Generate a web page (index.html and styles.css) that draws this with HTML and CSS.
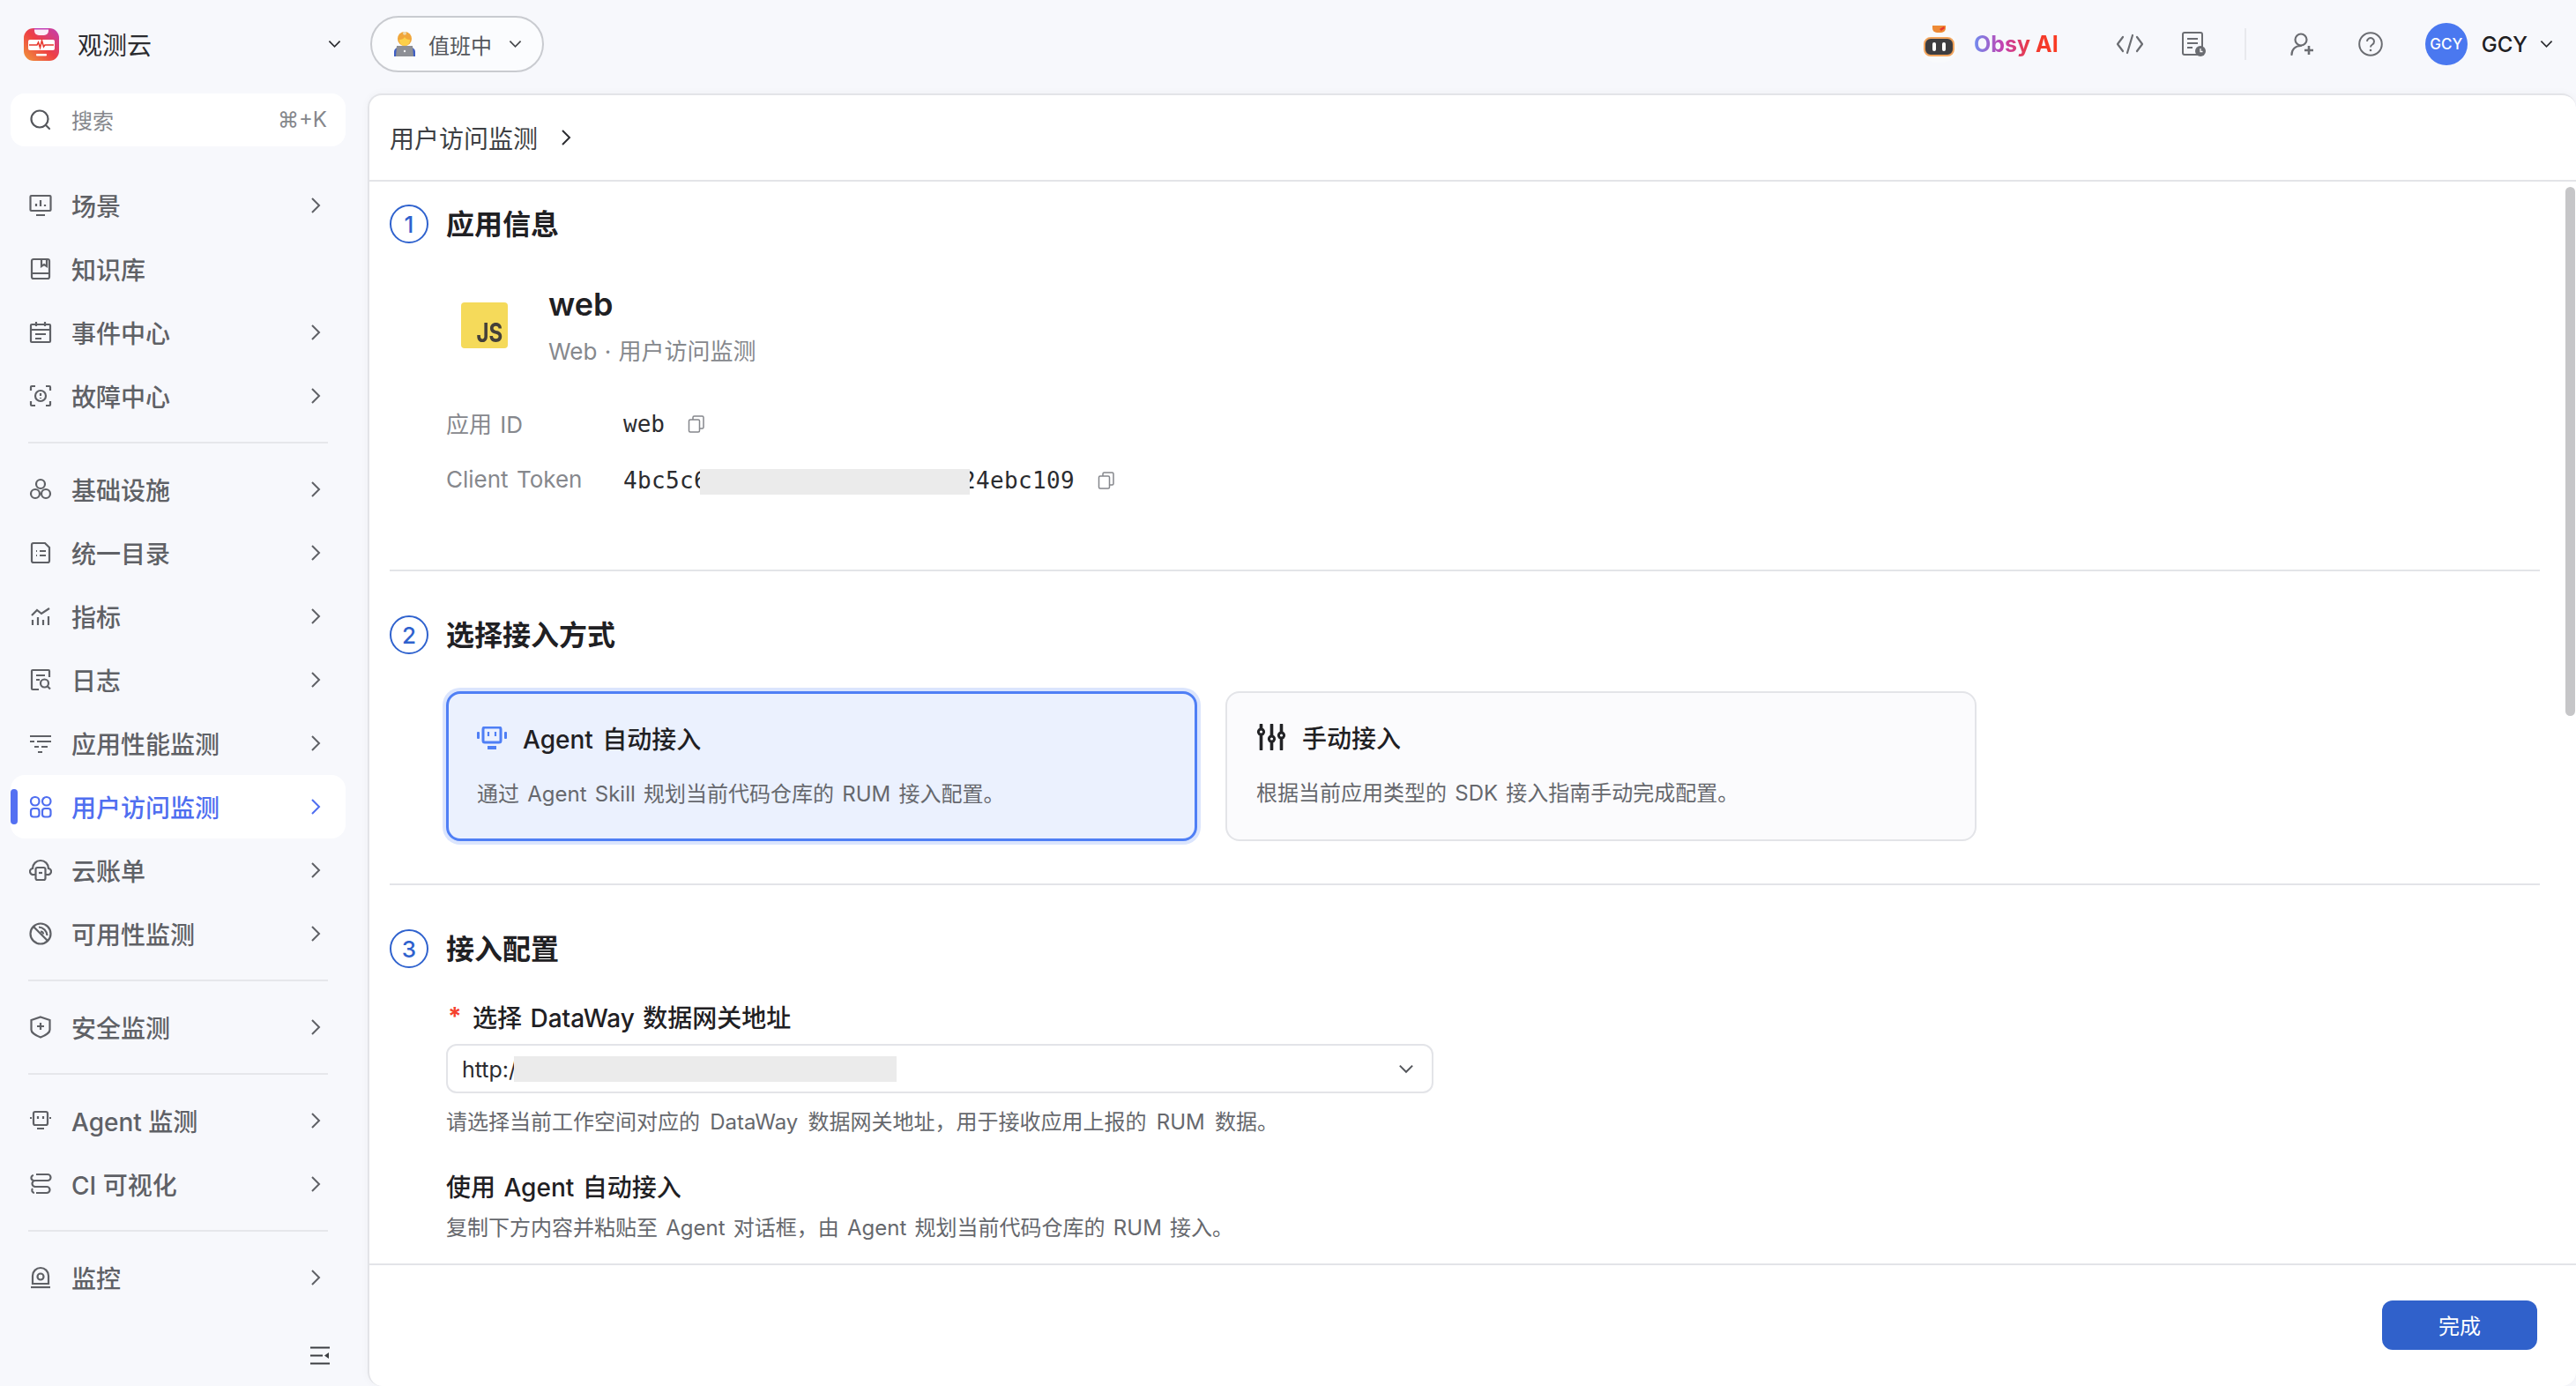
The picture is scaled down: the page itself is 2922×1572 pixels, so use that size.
FILE: index.html
```html
<!DOCTYPE html>
<html lang="zh-CN">
  <head>
    <meta charset="UTF-8" />
    <title>用户访问监测</title>
    <link rel="stylesheet" href="styles.css">
  </head>

  <body>
    <svg class="defs" width="0" height="0">
      <symbol id="chev-right" viewBox="0 0 12 20"><path d="M2 2l8 8-8 8" fill="none" stroke="currentColor" stroke-width="2"/></symbol>
      <symbol id="chev-down" viewBox="0 0 16 10"><path d="M1.5 1.5L8 8l6.5-6.5" fill="none" stroke="currentColor" stroke-width="1.8"/></symbol>
      <symbol id="copy" viewBox="0 0 20 20"><g fill="none" stroke="currentColor" stroke-width="1.5"><rect x="1.5" y="5" width="12" height="14" rx="1.5"/><path d="M6 5V2.5A1.5 1.5 0 0 1 7.5 1h9A1.5 1.5 0 0 1 18 2.500v11a1.500 1.500 0 0 1-1.500 1.500h-3"/></g></symbol>
    </svg>

    <header class="topbar">
      <div class="brand">
        <svg class="brand-logo" viewBox="0 0 40 37">
          <defs>
            <linearGradient id="logo-fill" x1="0" y1="1" x2="1" y2="0"><stop offset="0" stop-color="#f0983a"/><stop offset=".5" stop-color="#ee3f45"/><stop offset="1" stop-color="#c23fb4"/></linearGradient>
          </defs>
          <rect y="0" width="40" height="37" rx="11" fill="url(#logo-fill)"/>
          <path d="M12 0h16v3a5 5 0 0 1-5 5h-6a5 5 0 0 1-5-5z" fill="#fbeef8"/>
          <path d="M12 0h16v1.500H12z" fill="#c23fb4"/>
          <rect x="5" y="13" width="30" height="12" rx="2" fill="#fff"/>
          <path d="M6 19h9l1.500-3 2 6 2-8 2 7 1.500-2h10" fill="none" stroke="#e8392f" stroke-width="1.600"/>
          <rect x="14" y="29" width="12" height="2.500" rx="1" fill="#fff"/>
        </svg>
        <span class="brand-name">观测云</span>
        <svg class="brand-chev"><use href="#chev-down"/></svg>
      </div>

      <div class="duty-pill">
        <svg class="duty-emoji" viewBox="0 0 26 28">
          <circle cx="13" cy="8" r="8" fill="#f0a63a"/>
          <circle cx="13" cy="1.800" r="2" fill="#ecd9b0"/>
          <path d="M7 9c3 0 5-1 6-3 1 2 3 3 6 3v1a6 6 0 0 1-12 0z" fill="#fcd04a"/>
          <path d="M1 28v-5c0-3 2-5 5-5h14c3 0 5 2 5 5v5z" fill="#3f5fc4"/>
          <path d="M4 16h18l1 12H3z" fill="#8d8f95"/>
          <circle cx="13" cy="22" r="1.200" fill="#f2f2f2"/>
        </svg>
        <span>值班中</span>
        <svg class="duty-chev"><use href="#chev-down"/></svg>
      </div>

      <div class="topbar-right">
        <svg class="obsy-logo" viewBox="0 0 47 43">
          <path d="M23 4c13 0 22 9 22 21 0 11-9 17-21 17S2 36 2 25C2 13 11 4 23 4z" fill="#f9fafc"/>
          <path d="M16 0h15v3a5 5 0 0 1-5 5h-5a5 5 0 0 1-5-5z" fill="#ee8a35"/>
          <path d="M24 4l5-3 1 2-4 3z" fill="#e8392f"/>
          <rect x="7" y="14" width="33" height="20" rx="7" fill="#3d3d40" stroke="#f2a45c" stroke-width="2"/>
          <rect x="16" y="19" width="4" height="10" rx="2" fill="#fff"/>
          <rect x="27" y="19" width="4" height="10" rx="2" fill="#fff"/>
        </svg>
        <span class="obsy-text">Obsy AI</span>

        <svg class="tool tool-code" viewBox="0 0 32 24"><path d="M8 4L2 12l6 8M24 4l6 8-6 8M19 2l-6 20" fill="none" stroke="#6b6d72" stroke-width="2.200" stroke-linecap="round" stroke-linejoin="round"/></svg>
        <svg class="tool tool-doc" viewBox="0 0 27 28">
          <rect x="1" y="1" width="22" height="25" rx="2" fill="none" stroke="#6b6d72" stroke-width="2"/>
          <path d="M6 8h12M6 13h12M6 18h6" stroke="#6b6d72" stroke-width="2"/>
          <circle cx="21" cy="22" r="6" fill="#6b6d72"/>
          <path d="M21 19v3.500h2.500" fill="none" stroke="#fff" stroke-width="1.300"/>
        </svg>
        <div class="topbar-line"></div>
        <svg class="tool tool-user" viewBox="0 0 27 26">
          <circle cx="12" cy="8" r="6.500" fill="none" stroke="#6b6d72" stroke-width="2.200"/>
          <path d="M1.500 25c0-6 4-10 10.500-10" fill="none" stroke="#6b6d72" stroke-width="2.200" stroke-linecap="round"/>
          <path d="M21 15v10M16 20h10" stroke="#6b6d72" stroke-width="2.600"/>
        </svg>
        <svg class="tool tool-help" viewBox="0 0 28 28">
          <circle cx="14" cy="14" r="12.800" fill="none" stroke="#6b6d72" stroke-width="2"/>
          <path d="M10 11a4 4 0 1 1 6 3.500c-1.300.8-2 1.500-2 3" fill="none" stroke="#6b6d72" stroke-width="2"/>
          <circle cx="14" cy="21" r="1.300" fill="#6b6d72"/>
        </svg>
        <div class="avatar">GCY</div>
        <span class="user-name">GCY</span>
        <svg class="user-chev"><use href="#chev-down"/></svg>
      </div>
    </header>

    <div class="layout">
      <nav class="sidebar">
        <div class="search-box">
          <svg class="search-icon" viewBox="0 0 26 24"><circle cx="12" cy="11" r="9.500" fill="none" stroke="#55575c" stroke-width="2.200"/><path d="M19 18l4 4" stroke="#55575c" stroke-width="2.200" stroke-linecap="round"/></svg>
          <span class="search-text">搜索</span>
          <span class="search-key">⌘+K</span>
        </div>

        <div class="nav-group first">
          <a class="nav-item">
            <svg class="nav-icon" viewBox="0 0 26 26"><rect x="1.500" y="2" width="23" height="17" rx="1" /><path d="M8 14v-3M13 14V7M18 14v-2M8 24h10"/></svg>
            <span>场景</span>
            <svg class="nav-chev"><use href="#chev-right"/></svg>
          </a>
          <a class="nav-item">
            <svg class="nav-icon" viewBox="0 0 26 26"><rect x="3" y="2" width="20" height="22" rx="2"/><path d="M3 18h20M14 2v8l3-2 3 2V2" /></svg>
            <span>知识库</span>
          </a>
          <a class="nav-item">
            <svg class="nav-icon" viewBox="0 0 26 26"><rect x="2" y="4" width="22" height="20" rx="1"/><path d="M2 10h22M8 1v5M18 1v5M7 15h12M7 20h7"/></svg>
            <span>事件中心</span>
            <svg class="nav-chev"><use href="#chev-right"/></svg>
          </a>
          <a class="nav-item">
            <svg class="nav-icon" viewBox="0 0 26 26"><path d="M2 7V3a1 1 0 0 1 1-1h4M19 2h4a1 1 0 0 1 1 1v4M2 19v4a1 1 0 0 0 1 1h4M24 19v4a1 1 0 0 1-1 1h-4"/><circle cx="13" cy="13" r="6"/><path d="M13 10v3M13 15v1"/></svg>
            <span>故障中心</span>
            <svg class="nav-chev"><use href="#chev-right"/></svg>
          </a>
        </div>

        <div class="nav-group">
          <a class="nav-item">
            <svg class="nav-icon" viewBox="0 0 26 26"><circle cx="13" cy="7" r="5"/><circle cx="7" cy="18" r="5"/><circle cx="19" cy="18" r="5"/></svg>
            <span>基础设施</span>
            <svg class="nav-chev"><use href="#chev-right"/></svg>
          </a>
          <a class="nav-item">
            <svg class="nav-icon" viewBox="0 0 26 26"><path d="M3 4a2 2 0 0 1 2-2h13l5 5v15a2 2 0 0 1-2 2H5a2 2 0 0 1-2-2z"/><path d="M8 11h1M12 11h7M8 16h1M12 16h7"/></svg>
            <span>统一目录</span>
            <svg class="nav-chev"><use href="#chev-right"/></svg>
          </a>
          <a class="nav-item">
            <svg class="nav-icon" viewBox="0 0 26 26"><path d="M3 12l6-6 5 4 9-6M4 17v6M10 14v9M16 17v6M22 13v10"/></svg>
            <span>指标</span>
            <svg class="nav-chev"><use href="#chev-right"/></svg>
          </a>
          <a class="nav-item">
            <svg class="nav-icon" viewBox="0 0 26 26"><path d="M11 24H4a1 1 0 0 1-1-1V3a1 1 0 0 1 1-1h18a1 1 0 0 1 1 1v7"/><path d="M8 8h10M8 13h4"/><circle cx="17.500" cy="17" r="4.500"/><path d="M21 20.500l3 3"/></svg>
            <span>日志</span>
            <svg class="nav-chev"><use href="#chev-right"/></svg>
          </a>
          <a class="nav-item">
            <svg class="nav-icon" viewBox="0 0 26 26"><path d="M1 5h24M1 11h5M9 11h16M6 17h5M14 17h7M10 23h5"/></svg>
            <span>应用性能监测</span>
            <svg class="nav-chev"><use href="#chev-right"/></svg>
          </a>
          <a class="nav-item active">
            <i class="nav-marker"></i>
            <svg class="nav-icon" viewBox="0 0 26 26"><rect x="2" y="2" width="9.500" height="9.500" rx="4.500"/><rect x="15" y="2" width="9.500" height="9.500" rx="4.750"/><rect x="2" y="15" width="9.500" height="9.500" rx="3"/><rect x="15" y="15" width="9.500" height="9.500" rx="3"/></svg>
            <span>用户访问监测</span>
            <svg class="nav-chev"><use href="#chev-right"/></svg>
          </a>
          <a class="nav-item">
            <svg class="nav-icon" viewBox="0 0 26 26"><path d="M7 18H5a3.500 3.500 0 0 1-1-7 9 9 0 0 1 18 0 3.500 3.500 0 0 1-1 7h-2"/><rect x="7.500" y="10" width="11" height="14" rx="2"/><path d="M11 16h4"/></svg>
            <span>云账单</span>
            <svg class="nav-chev"><use href="#chev-right"/></svg>
          </a>
          <a class="nav-item">
            <svg class="nav-icon" viewBox="0 0 26 26"><circle cx="13" cy="13" r="11.500"/><path d="M5 5l16 16M11 5.500a10 10 0 0 1 9.500 9.500M13 10.500a3 3 0 0 1 3 3"/></svg>
            <span>可用性监测</span>
            <svg class="nav-chev"><use href="#chev-right"/></svg>
          </a>
        </div>

        <div class="nav-group">
          <a class="nav-item">
            <svg class="nav-icon" viewBox="0 0 26 26"><path d="M13 1.500l10.500 3.500v11c0 3-5 6.500-10.500 8.500C7.500 22.500 2.500 19 2.500 16V5z"/><path d="M13 8v8M9 12h8"/></svg>
            <span>安全监测</span>
            <svg class="nav-chev"><use href="#chev-right"/></svg>
          </a>
        </div>

        <div class="nav-group">
          <a class="nav-item">
            <svg class="nav-icon" viewBox="0 0 26 26"><rect x="5" y="3" width="16" height="15" rx="2"/><path d="M10 8v3M16 8v3M1 10h2M23 10h2M9 22h8"/></svg>
            <span>Agent 监测</span>
            <svg class="nav-chev"><use href="#chev-right"/></svg>
          </a>
          <a class="nav-item">
            <svg class="nav-icon" viewBox="0 0 26 26"><path d="M8 2h13a2.500 2.500 0 0 1 0 7H7a3.500 3.500 0 0 0 0 7h13a3 3 0 0 1 0 7H8"/><path d="M5 3a3 3 0 0 0 1 6M4 18a3 3 0 0 0 2 5"/></svg>
            <span>CI 可视化</span>
            <svg class="nav-chev"><use href="#chev-right"/></svg>
          </a>
        </div>

        <div class="nav-group">
          <a class="nav-item">
            <svg class="nav-icon" viewBox="0 0 26 26"><path d="M4 20V11a9 9 0 0 1 18 0v9z"/><circle cx="13" cy="12" r="3.500"/><path d="M2 24h22"/></svg>
            <span>监控</span>
            <svg class="nav-chev"><use href="#chev-right"/></svg>
          </a>
        </div>

        <svg class="collapse-icon" viewBox="0 0 22 21"><path d="M0 1.500h22M0 10.500h14M0 19.500h22" stroke="#3c3e42" stroke-width="2.200"/><path d="M21 7v7l-5-3.500z" fill="#3c3e42"/></svg>
      </nav>

      <main class="panel">
        <div class="crumb">
          <span>用户访问监测</span>
          <svg class="crumb-chev"><use href="#chev-right"/></svg>
        </div>

        <div class="content">
          <div class="scroll-thumb"></div>

          <section class="step">
            <div class="step-head"><span class="step-no">1</span><h2>应用信息</h2></div>
            <div class="step-body">
              <div class="app-row">
                <div class="js-logo"><span>JS</span></div>
                <div>
                  <div class="app-name">web</div>
                  <div class="app-sub">Web · 用户访问监测</div>
                </div>
              </div>
              <div class="info-row first">
                <span class="info-label">应用 ID</span>
                <span class="info-value">web</span>
                <svg class="copy-icon"><use href="#copy"/></svg>
              </div>
              <div class="info-row">
                <span class="info-label">Client Token</span>
                <span class="info-value token">4bc5c6<i class="mask token-mask"></i><span class="token-rest">24ebc109</span></span>
                <svg class="copy-icon"><use href="#copy"/></svg>
              </div>
            </div>
          </section>

          <section class="step step-mode">
            <div class="step-head"><span class="step-no">2</span><h2>选择接入方式</h2></div>
            <div class="step-body cards">
              <div class="card selected">
                <div class="card-title">
                  <svg class="card-icon" viewBox="0 0 34 26"><rect x="7" y="1" width="20" height="17" rx="2" fill="none" stroke="#4f7ff5" stroke-width="3"/><path d="M13 6v5M21 6v5" stroke="#4f7ff5" stroke-width="2.200"/><rect x="0" y="6" width="3" height="8" rx="1" fill="#4f7ff5"/><rect x="31" y="6" width="3" height="8" rx="1" fill="#4f7ff5"/><rect x="12" y="22" width="10" height="4" fill="#4f7ff5"/></svg>
                  <span>Agent 自动接入</span>
                </div>
                <p>通过 Agent Skill 规划当前代码仓库的 RUM 接入配置。</p>
              </div>
              <div class="card">
                <div class="card-title">
                  <svg class="card-icon manual" viewBox="0 0 33 30"><path d="M5 1v28M17 1v28M28 1v28" stroke="#222326" stroke-width="3.600" stroke-linecap="round"/><g fill="#222326"><circle cx="5" cy="9" r="4.600"/><circle cx="17" cy="17" r="4.600"/><circle cx="28" cy="13" r="4.600"/></g><g fill="#fbfbfd"><circle cx="5" cy="9" r="1.600"/><circle cx="17" cy="17" r="1.600"/><circle cx="28" cy="13" r="1.600"/></g></svg>
                  <span>手动接入</span>
                </div>
                <p>根据当前应用类型的 SDK 接入指南手动完成配置。</p>
              </div>
            </div>
          </section>

          <section class="step step-config">
            <div class="step-head"><span class="step-no">3</span><h2>接入配置</h2></div>
            <div class="step-body">
              <div class="field-label"><span class="required">*</span>选择 DataWay 数据网关地址</div>
              <div class="select">
                <span>http:/</span>
                <i class="mask select-mask"></i>
                <svg class="select-chev"><use href="#chev-down"/></svg>
              </div>
              <p class="help">请选择当前工作空间对应的 DataWay 数据网关地址，用于接收应用上报的 RUM 数据。</p>
              <div class="field-label agent-label">使用 Agent 自动接入</div>
              <p class="help agent-help">复制下方内容并粘贴至 Agent 对话框，由 Agent 规划当前代码仓库的 RUM 接入。</p>
            </div>
          </section>
        </div>

        <footer class="panel-foot">
          <button class="done-btn">完成</button>
        </footer>
      </main>
    </div>
  </body>
</html>
```

FILE: styles.css
```css
* {
  box-sizing: border-box;
}

html,
body {
  margin: 0;
  height: 100%;
}

body {
  display: flex;
  flex-direction: column;
  height: 1572px;
  overflow: hidden;
  background-color: #f7f8fc;
  color: #1f2023;
  font-family: "Inter", "Noto Sans CJK SC", sans-serif;
}

.defs {
  position: absolute;
}

/* top bar */
.topbar {
  display: flex;
  align-items: center;
  flex: none;
  height: 106px;
  padding: 0 26px 6px 27px;
}

.brand {
  display: flex;
  align-items: center;
  width: 360px;
}

.brand-logo {
  width: 40px;
  height: 37px;
}

.brand-name {
  margin-left: 21px;
  font-size: 28px;
  color: #2b2c30;
}

.brand-chev {
  width: 15px;
  height: 10px;
  margin-left: auto;
  color: #2b2c30;
}

.duty-pill {
  display: flex;
  align-items: center;
  width: 197px;
  height: 64px;
  margin-left: 33px;
  padding-left: 24px;
  border: 2px solid #c9cbd0;
  border-radius: 32px;
  background-color: #fbfcfe;
  font-size: 24px;
  color: #54565b;
}

.duty-emoji {
  width: 26px;
  height: 28px;
  margin-right: 14px;
}

.duty-chev {
  width: 15px;
  height: 10px;
  margin-left: 19px;
  color: #45474b;
}

.topbar-right {
  display: flex;
  align-items: center;
  margin-left: auto;
}

.obsy-logo {
  width: 47px;
  height: 43px;
}

.obsy-text {
  margin-left: 16px;
  font-size: 25px;
  font-weight: 700;
  background: linear-gradient(90deg, #6f8df0 0%, #c63fae 35%, #f0392f 70%, #fb3b22 100%);
  -webkit-background-clip: text;
  background-clip: text;
  color: transparent;
}

.tool-code {
  width: 32px;
  height: 24px;
  margin-left: 65px;
}

.tool-doc {
  width: 27px;
  height: 28px;
  margin-left: 43px;
}

.topbar-line {
  width: 2px;
  height: 36px;
  margin-left: 44px;
  background-color: #e8e9ed;
}

.tool-user {
  width: 27px;
  height: 26px;
  margin-left: 50px;
}

.tool-help {
  width: 28px;
  height: 28px;
  margin-left: 50px;
}

.avatar {
  display: flex;
  justify-content: center;
  align-items: center;
  width: 48px;
  height: 48px;
  margin-left: 48px;
  border-radius: 50%;
  background-color: #4a78f0;
  color: white;
  font-size: 17px;
  font-weight: 500;
}

.user-name {
  margin-left: 16px;
  font-size: 24px;
  font-weight: 500;
}

.user-chev {
  width: 15px;
  height: 10px;
  margin-left: 14px;
  color: #2b2c30;
}

/* sidebar */
.layout {
  display: flex;
  flex: 1;
  min-height: 0;
}

.sidebar {
  position: relative;
  flex: none;
  width: 417px;
  padding: 0 25px 0 12px;
}

.search-box {
  display: flex;
  align-items: center;
  height: 60px;
  padding: 0 21px;
  border-radius: 16px;
  background-color: white;
}

.search-icon {
  width: 26px;
  height: 24px;
}

.search-text {
  margin-left: 22px;
  padding-bottom: 2px;
  font-size: 24px;
  color: #85878c;
}

.search-key {
  margin-left: auto;
  padding-bottom: 2px;
  font-size: 24px;
  color: #85878c;
}

.nav-group {
  margin-top: 16px;
}

.nav-group::before {
  content: "";
  display: block;
  height: 2px;
  margin: 0 20px 16px;
  background-color: #e6e7eb;
}

.nav-group.first {
  margin-top: 31px;
}

.nav-group.first::before {
  display: none;
}

.nav-item {
  position: relative;
  display: flex;
  align-items: center;
  height: 72px;
  padding-left: 21px;
  border-radius: 16px;
  font-size: 28px;
  font-weight: 500;
  color: #5f6166;
}

.nav-item span {
  margin-left: 22px;
}

.nav-icon {
  flex: none;
  width: 26px;
  height: 26px;
  fill: none;
  stroke: currentColor;
  stroke-width: 2.2;
}

.nav-chev {
  width: 12px;
  height: 20px;
  margin-left: auto;
  margin-right: 28px;
}

.nav-item.active {
  background-color: white;
  color: #4f6ef0;
}

.nav-marker {
  position: absolute;
  top: 16px;
  left: 0;
  width: 8px;
  height: 40px;
  border-radius: 4px;
  background-color: #5470f2;
}

.collapse-icon {
  position: absolute;
  top: 1421px;
  left: 352px;
  width: 22px;
  height: 21px;
}

/* main panel */
.panel {
  position: relative;
  display: flex;
  flex-direction: column;
  flex: 1;
  min-width: 0;
  border: 2px solid #e3e4e8;
  border-right: 0;
  border-bottom: 0;
  border-radius: 16px;
  background-color: white;
  box-shadow: 0 0 10px rgba(0, 0, 0, 0.04);
}

.crumb {
  display: flex;
  align-items: center;
  flex: none;
  height: 98px;
  padding-left: 23px;
  border-bottom: 2px solid #e3e4e8;
  font-size: 28px;
  color: #3d3f43;
}

.crumb-chev {
  width: 12px;
  height: 20px;
  margin-left: 26px;
  color: #2b2c30;
}

.content {
  position: relative;
  flex: 1;
  min-height: 0;
  overflow: hidden;
  padding: 26px 41px 0 23px;
}

.scroll-thumb {
  position: absolute;
  top: 6px;
  right: 1px;
  width: 11px;
  height: 600px;
  border-radius: 6px;
  background-color: #c6c6c8;
}

.step {
  padding-bottom: 83px;
  border-bottom: 2px solid #e3e4e8;
}

.step-mode {
  padding-top: 50px;
  padding-bottom: 48px;
}

.step-config {
  padding-top: 50px;
  padding-bottom: 0;
  border-bottom: 0;
}

.step-head {
  display: flex;
  align-items: center;
  gap: 20px;
}

.step-head h2 {
  margin: 0;
  padding-top: 2px;
  font-size: 32px;
  font-weight: 600;
  line-height: 42px;
}

.step-no {
  display: flex;
  justify-content: center;
  align-items: center;
  width: 44px;
  height: 44px;
  border: 2px solid #2f62ce;
  border-radius: 50%;
  color: #2f62ce;
  font-size: 26px;
  font-weight: 500;
}

.step-body {
  padding-left: 64px;
}

.app-row {
  display: flex;
  align-items: center;
  gap: 46px;
  margin-top: 44px;
  padding-left: 17px;
}

.js-logo {
  display: flex;
  justify-content: flex-end;
  align-items: flex-end;
  width: 53px;
  height: 52px;
  padding: 0 6px 3px 0;
  border-radius: 4px;
  background-color: #f5da5a;
  color: #44403a;
  font-size: 30px;
  font-weight: 700;
  line-height: 30px;
}

.js-logo span {
  transform: scaleX(0.8);
  transform-origin: right;
}

.app-name {
  font-size: 36px;
  font-weight: 600;
  line-height: 50px;
}

.app-sub {
  margin-top: 11px;
  font-size: 26px;
  line-height: 36px;
  word-spacing: 1px;
  color: #86888d;
}

.info-row {
  display: flex;
  align-items: center;
  height: 36px;
  margin-top: 28px;
  font-size: 26px;
}

.info-row.first {
  margin-top: 46px;
}

.info-label {
  width: 201px;
  padding-bottom: 3px;
  word-spacing: 2px;
  color: #86888d;
}

.info-value {
  font-family: "DejaVu Sans Mono", monospace;
  color: #2b2c30;
}

.info-row .token {
  position: relative;
  letter-spacing: 0.35px;
}

.token-rest {
  margin-left: 288px;
}

.mask {
  display: block;
  background-color: #ebebeb;
}

.token-mask {
  position: absolute;
  top: 2px;
  left: 87px;
  width: 306px;
  height: 29px;
}

.copy-icon {
  width: 20px;
  height: 20px;
  margin-left: 26px;
  color: #85878c;
}

.cards {
  display: flex;
  gap: 32px;
  margin-top: 42px;
}

.card {
  width: 852px;
  height: 170px;
  padding: 30px 33px 0;
  border: 2px solid #e3e4e8;
  border-radius: 16px;
  background-color: #fbfbfd;
}

.card.selected {
  padding-left: 32px;
  border: 3px solid #4f7ff5;
  background-color: #ebf1fe;
  box-shadow: 0 0 0 4px #dbe5fd;
}

.card-title {
  display: flex;
  align-items: center;
  gap: 18px;
  height: 40px;
  font-size: 28px;
  font-weight: 500;
  word-spacing: 3px;
}

.card-icon {
  width: 34px;
  height: 26px;
}

.card-icon.manual {
  height: 30px;
}

.card p {
  margin: 27px 0 0;
  font-size: 24px;
  line-height: 34px;
  word-spacing: 2.5px;
  color: #66686d;
}

.field-label {
  display: flex;
  align-items: center;
  height: 40px;
  margin-top: 36px;
  padding-bottom: 3px;
  font-size: 28px;
  font-weight: 500;
  word-spacing: 2px;
}

.required {
  width: 30px;
  padding-left: 2px;
  color: #f5422d;
  font-weight: 700;
}

.select {
  position: relative;
  display: flex;
  align-items: center;
  width: 1120px;
  height: 56px;
  margin-top: 10px;
  padding: 2px 0 0 16px;
  border: 2px solid #e3e4e8;
  border-radius: 12px;
  font-size: 25px;
  color: #2b2c30;
}

.select-mask {
  position: absolute;
  top: 12px;
  left: 75px;
  width: 434px;
  height: 29px;
}

.select-chev {
  width: 18px;
  height: 11px;
  margin-left: auto;
  margin-right: 20px;
  margin-top: -2px;
  color: #55575c;
}

.help {
  margin: 16px 0 0;
  font-size: 24px;
  line-height: 34px;
  word-spacing: 4.5px;
  color: #66686d;
}

.agent-label {
  margin-top: 36px;
}

.help.agent-help {
  margin-top: 10px;
  word-spacing: 2.5px;
}

.panel-foot {
  display: flex;
  justify-content: flex-end;
  flex: none;
  height: 139px;
  padding: 40px 44px 0 0;
  border-top: 2px solid #e3e4e8;
}

.done-btn {
  width: 176px;
  height: 56px;
  padding: 0 0 2px;
  border: 0;
  border-radius: 12px;
  background-color: #3061cb;
  color: white;
  font-family: "Inter", "Noto Sans CJK SC", sans-serif;
  font-size: 24px;
}
```
